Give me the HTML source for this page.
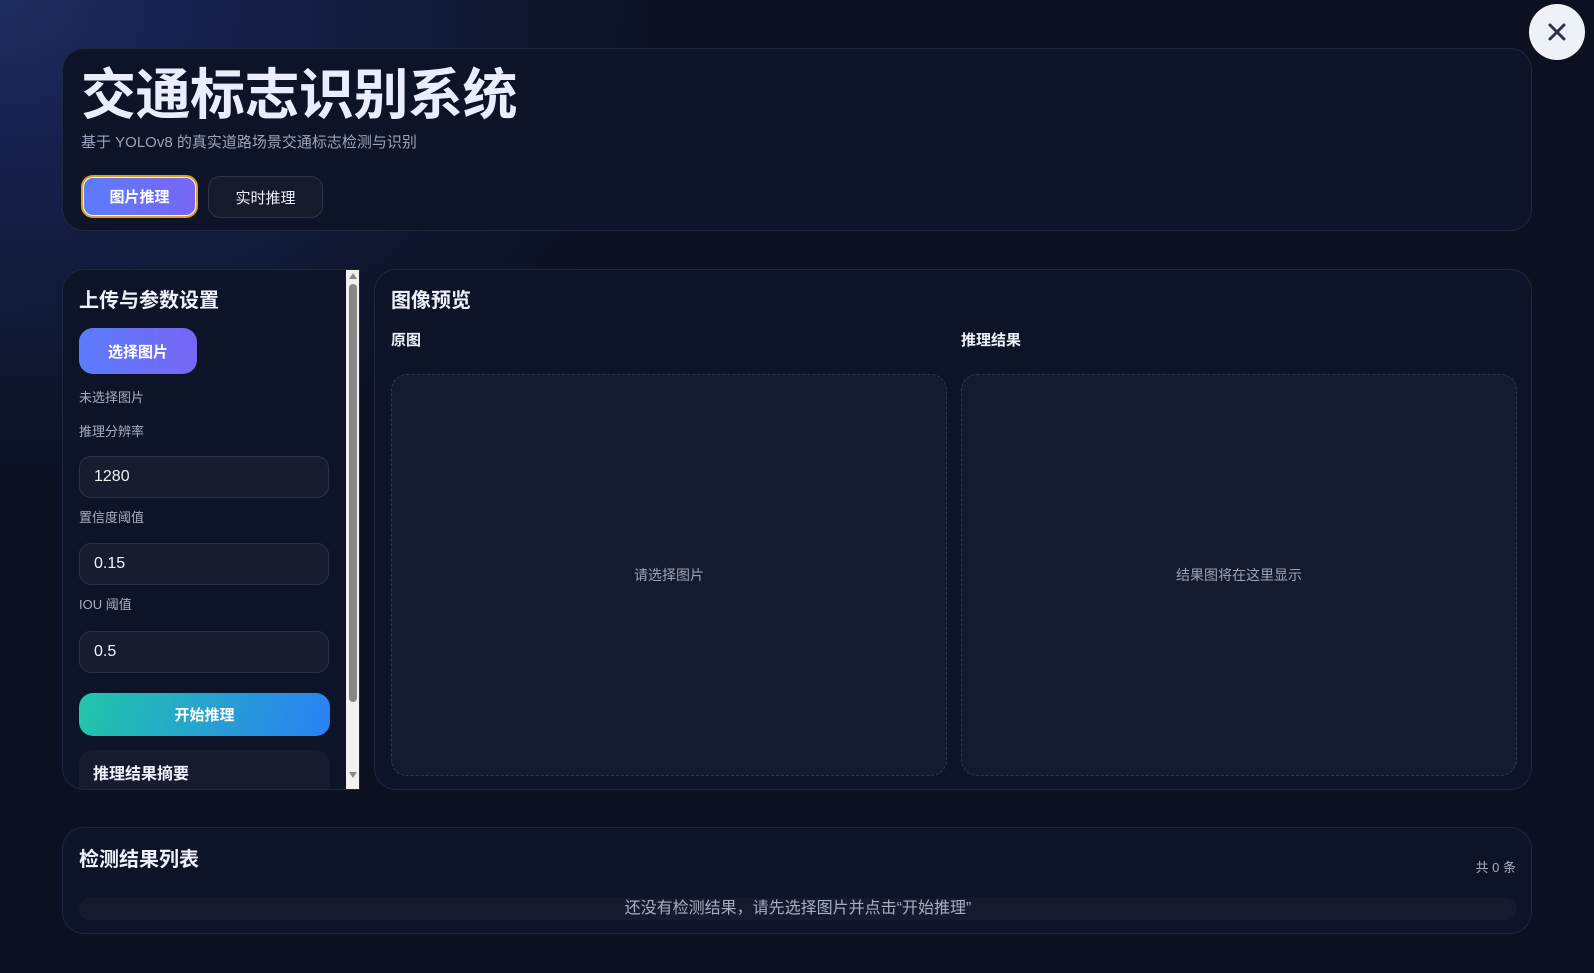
<!DOCTYPE html>
<html><head><meta charset="utf-8"><style>
*{box-sizing:border-box;margin:0;padding:0}
body{width:1594px;height:973px;overflow:hidden;position:relative;font-family:"Liberation Sans","Noto Sans CJK SC",sans-serif;color:#e8ecf8;
background:radial-gradient(ellipse 700px 500px at 0px 0px,#1f2c5e 0%,#172250 25%,#111a38 60%,rgba(11,17,32,0) 100%),#0b1120;}
.card{position:absolute;background:#0e1427;border:1px solid #1f2740;border-radius:22px}
.abs{position:absolute}
.lbl{position:absolute;font-size:13px;color:#a6aec4;left:16px}
.inp{position:absolute;left:16px;width:250px;height:42px;border:1px solid #2b3347;border-radius:12px;background:#171d2f;color:#f0f2f8;font-size:16px;padding:11px 14px}
.h{font-weight:700;color:#eef1fa}
.box{position:absolute;border:1px dashed #2f374c;border-radius:16px;background:#151b2e;color:#9aa3b9;font-size:14px;display:flex;align-items:center;justify-content:center}
</style></head><body>
<div class="card" style="left:62px;top:48px;width:1470px;height:183px">
 <div class="abs h" style="left:18px;top:11px;font-size:55px;line-height:70px;color:#eaeefc;letter-spacing:-0.5px">交通标志识别系统</div>
 <div class="abs" style="left:18px;top:82px;font-size:15px;color:#9aa3bb">基于 YOLOv8 的真实道路场景交通标志检测与识别</div>
 <div class="abs" style="left:18px;top:126px;width:117px;height:43px;border-radius:12px;border:2px solid #e0a020;background:linear-gradient(90deg,#5b7cfb,#7866f6);box-shadow:0 0 0 1px #fff inset;color:#fff;font-size:15px;font-weight:700;display:flex;align-items:center;justify-content:center">图片推理</div>
 <div class="abs" style="left:145px;top:127px;width:115px;height:42px;border-radius:12px;border:1px solid #2e3548;background:#161b2c;color:#eef;font-size:15px;display:flex;align-items:center;justify-content:center">实时推理</div>
</div>
<div class="abs" style="left:1529px;top:4px;width:56px;height:56px;border-radius:50%;background:#eef1f8;">
 <svg width="56" height="56" style="position:absolute;left:0;top:0"><path d="M21 21L35 35M35 21L21 35" stroke="#2d3344" stroke-width="3" stroke-linecap="round"/></svg>
</div>
<div class="card" style="left:62px;top:269px;width:298px;height:521px;border-radius:22px 0 0 22px;overflow:hidden">
 <div class="abs h" style="left:16px;top:14px;font-size:20px">上传与参数设置</div>
 <div class="abs" style="left:16px;top:58px;width:118px;height:46px;border-radius:14px;background:linear-gradient(90deg,#5b7cfb,#7866f6);color:#fff;font-weight:700;font-size:15px;display:flex;align-items:center;justify-content:center">选择图片</div>
 <div class="lbl" style="top:117px">未选择图片</div>
 <div class="lbl" style="top:151px">推理分辨率</div>
 <div class="inp" style="top:186px">1280</div>
 <div class="lbl" style="top:237px">置信度阈值</div>
 <div class="inp" style="top:273px">0.15</div>
 <div class="lbl" style="top:324px">IOU 阈值</div>
 <div class="inp" style="top:361px">0.5</div>
 <div class="abs" style="left:16px;top:423px;width:251px;height:43px;border-radius:14px;background:linear-gradient(110deg,#22c7a9,#2a7ff6);color:#fff;font-weight:700;font-size:15px;display:flex;align-items:center;justify-content:center">开始推理</div>
 <div class="abs" style="left:16px;top:480px;width:251px;height:60px;border-radius:14px;background:#161c2e">
  <div class="abs h" style="left:14px;top:10px;font-size:16px">推理结果摘要</div></div>
 <div class="abs" style="left:283px;top:-1px;width:15px;height:523px;background:#f1f1f1">
  <div class="abs" style="left:3px;top:15px;width:8px;height:418px;border-radius:4px;background:#878787"></div>
  <div class="abs" style="left:3px;top:4px;width:0;height:0;border-left:4px solid transparent;border-right:4px solid transparent;border-bottom:6px solid #888"></div>
  <div class="abs" style="left:3px;top:503px;width:0;height:0;border-left:4px solid transparent;border-right:4px solid transparent;border-top:6px solid #888"></div>
 </div>
</div>
<div class="card" style="left:374px;top:269px;width:1158px;height:521px">
 <div class="abs h" style="left:16px;top:14px;font-size:20px">图像预览</div>
 <div class="abs h" style="left:16px;top:59px;font-size:15px">原图</div>
 <div class="abs h" style="left:586px;top:59px;font-size:15px">推理结果</div>
 <div class="box" style="left:16px;top:104px;width:556px;height:402px">请选择图片</div>
 <div class="box" style="left:586px;top:104px;width:556px;height:402px">结果图将在这里显示</div>
</div>
<div class="card" style="left:62px;top:827px;width:1470px;height:107px">
 <div class="abs h" style="left:16px;top:15px;font-size:20px">检测结果列表</div>
 <div class="abs" style="right:15px;top:29px;font-size:13px;color:#a6aec4">共 0 条</div>
 <div class="abs" style="left:16px;top:70px;width:1438px;height:22px;border-radius:11px;background:#151b2d;color:#a6aec4;font-size:16px;text-align:center;line-height:22px">还没有检测结果，请先选择图片并点击“开始推理”</div>
</div>
</body></html>
